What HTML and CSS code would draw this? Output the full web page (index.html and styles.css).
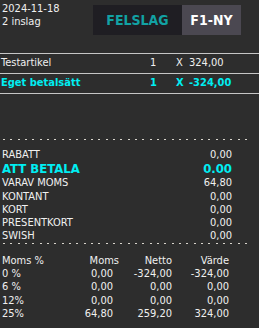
FILE: index.html
```html
<!DOCTYPE html>
<html lang="sv">
<head>
  <meta charset="UTF-8">
  <meta name="viewport" content="width=device-width,initial-scale=1.0">
  <title>Kassa</title>
  <link rel="stylesheet" href="styles.css">
</head>
<body>
  <div class="screen">
    <!-- huvud -->
    <header class="top">
      <div class="stamp">
        <div>2024-11-18</div>
        <div>2 inslag</div>
      </div>
      <div class="actions">
        <button class="btn btn-undo">FELSLAG</button>
        <button class="btn btn-new">F1-NY</button>
      </div>
    </header>

    <!-- rader -->
    <div class="items">
      <div class="item">
        <span>Testartikel</span><span>1</span><span>X</span><span>324,00</span>
      </div>
      <div class="item item-pay">
        <span>Eget betalsätt</span><span>1</span><span>X</span><span>-324,00</span>
      </div>
    </div>

    <div class="dots dots-first"></div>

    <!-- summering -->
    <div class="summary">
      <div class="sum-row"><span>RABATT</span><span>0,00</span></div>
      <div class="sum-row sum-total"><span>ATT BETALA</span><span>0.00</span></div>
      <div class="sum-row"><span>VARAV MOMS</span><span>64,80</span></div>
      <div class="sum-row"><span>KONTANT</span><span>0,00</span></div>
      <div class="sum-row"><span>KORT</span><span>0,00</span></div>
      <div class="sum-row"><span>PRESENTKORT</span><span>0,00</span></div>
      <div class="sum-row"><span>SWISH</span><span>0,00</span></div>
    </div>

    <div class="dots"></div>

    <!-- moms -->
    <div class="vat">
      <span>Moms %</span><span class="vat-head-moms">Moms</span><span>Netto</span><span>Värde</span>
      <span>0 %</span><span>0,00</span><span>-324,00</span><span>-324,00</span>
      <span>6 %</span><span>0,00</span><span>0,00</span><span>0,00</span>
      <span>12%</span><span>0,00</span><span>0,00</span><span>0,00</span>
      <span>25%</span><span>64,80</span><span>259,20</span><span>324,00</span>
    </div>
  </div>
</body>
</html>
```

FILE: styles.css
```css
/* ——— grund ——— */
:root {
  --bg: #2d2d2d;   --fg: #f0f0f0;
  --line: #c6c6c6; --cyan: #00eef2;
  --teal: #12a2a4; --btn-dark: #1f1e23; --btn-light: #4b4851;
}
body {
  margin:0; background:var(--bg); color:var(--fg);
  font-family:"DejaVu Sans Condensed","DejaVu Sans",sans-serif;
  font-stretch:condensed; font-size:11px;
}
.screen { width:259px; height:328px; overflow:hidden; }

/* ——— huvud ——— */
.top {
  display:flex; height:53px;
  border-bottom:1px solid var(--line);
}
.stamp { padding:2px 0 0 2px; line-height:13px; }
.actions { display:flex; margin:5px 18px 0 auto; height:30px; }
.btn {
  border:none; margin:0; padding:0; height:30px;
  font-family:inherit; font-stretch:condensed;
  font-size:14px; font-weight:bold; cursor:pointer;
}
.btn-undo { width:89px; background:var(--btn-dark); color:var(--teal); }
.btn-new { width:59px; background:var(--btn-light); color:#fff; }

/* ——— rader ——— */
.item {
  display:grid; grid-template-columns:149px 26px 13px auto;
  padding:2px 0 4px 1px; line-height:13px;
  border-bottom:1px solid var(--line);
}
.item-pay { color:var(--cyan); font-weight:bold; }

.dots {
  height:1px; width:244px; margin-left:3px;
  background:repeating-linear-gradient(to right, #d8d4cc 0 2px, transparent 2px 7.33px);
}
.dots-first { margin-top:45px; }

/* ——— summering ——— */
.summary { margin-top:8px; padding:0 27px 0 2px; }
.sum-row {
  display:flex; justify-content:space-between;
  line-height:13.3px;
}
.sum-total {
  color:var(--cyan); font-weight:bold;
  font-size:13px; line-height:15px;
}

/* ——— moms ——— */
.vat {
  display:grid; grid-template-columns:60px 51px 59px 57px;
  margin-top:10px; padding-left:2px; line-height:13.3px;
}
.vat span:not(:nth-child(4n+1)) { text-align:right; }
.vat .vat-head-moms { justify-self:end; margin-right:-6px; }
```
